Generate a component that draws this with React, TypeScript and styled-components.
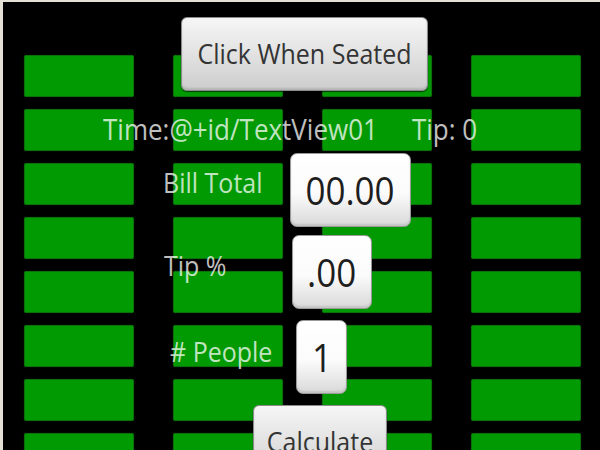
import React from 'react';
import styled, { createGlobalStyle } from 'styled-components';

const GlobalStyle = createGlobalStyle`
  html, body {
    margin: 0;
    padding: 0;
    background: #000000;
  }
  * {
    box-sizing: border-box;
  }
`;

const Screen = styled.div`
  position: relative;
  width: 600px;
  height: 450px;
  overflow: hidden;
  background: #000000;
  border-top: 2px solid #e4e0d6;
  border-left: 3px solid #e4e0d6;
  font-family: "Open Sans", "DejaVu Sans", sans-serif;
`;

const TileGrid = styled.div`
  display: grid;
  grid-template-columns: repeat(4, 110px);
  grid-auto-rows: 42px;
  column-gap: 39px;
  row-gap: 12px;
  padding: 53px 0 0 21px;
`;

const Tile = styled.div`
  background: #029a02;
  border: 1px solid #0b6f0b;
  border-radius: 2px;
  box-shadow: 0 0 1px #0a5a0a;
`;

const Form = styled.div`
  position: absolute;
  inset: 0;
  display: flex;
  flex-direction: column;
  align-items: flex-start;
  padding-top: 15px;

  & > * {
    flex-shrink: 0;
  }
`;

// screenshot is stretched a little vertically
const Tall = styled.span`
  display: inline-block;
  transform: scaleY(1.12);
`;

const AndroidButton = styled.button<{ $left: number; $width: number; $top?: number }>`
  display: flex;
  align-items: center;
  justify-content: center;
  margin: ${p => p.$top ?? 0}px 0 0 ${p => p.$left}px;
  width: ${p => p.$width}px;
  height: 74px;
  padding: 0 0 3px;
  border: 1px solid #8a8a8a;
  border-radius: 6px;
  background: linear-gradient(#f6f6f6 0%, #e4e4e4 45%, #cdcdcd 100%);
  box-shadow: inset 0 -2px 2px rgba(0, 0, 0, 0.12), 0 1px 1px rgba(0, 0, 0, 0.6);
  color: #343434;
  font-family: "Open Sans", "DejaVu Sans", sans-serif;
  font-size: 25px;
  cursor: pointer;
`;

const InfoRow = styled.div`
  display: flex;
  gap: 34px;
  margin: 21px 0 0 100px;
  height: 34px;
  font-size: 26px;
`;

const Label = styled.span<{ $offset?: number }>`
  margin-top: ${p => p.$offset ?? 0}px;
  color: rgba(255, 255, 255, 0.76);
  font-size: inherit;
  line-height: 34px;
  white-space: nowrap;
`;

const FieldRow = styled.div<{ $left: number; $gap: number; $top: number }>`
  display: flex;
  align-items: flex-start;
  gap: ${p => p.$gap}px;
  margin: ${p => p.$top}px 0 0 ${p => p.$left}px;
  font-size: 25px;
`;

const EditBox = styled.div<{ $width: number }>`
  display: flex;
  align-items: center;
  justify-content: center;
  width: ${p => p.$width}px;
  height: 74px;
  border: 1px solid #9a9a9a;
  border-radius: 7px;
  background: linear-gradient(#ffffff 0%, #fbfbfb 55%, #d9d9d9 100%);
  box-shadow: inset 0 -2px 2px rgba(0, 0, 0, 0.1);
  color: #1e1e1e;
  font-size: 35px;
  padding-bottom: 2px;
`;

const fields = [
  { label: 'Bill Total', value: '00.00', left: 160, gap: 27, top: 7, offset: 12, width: 121 },
  { label: 'Tip %', value: '.00', left: 161, gap: 65, top: 8, offset: 13, width: 80 },
  { label: '# People', value: '1', left: 167, gap: 24, top: 11, offset: 14, width: 51 },
];

export default function App() {
  const tiles = Array.from({ length: 32 }, (_, i) => i);

  return (
    <>
      <GlobalStyle />
      <Screen>
        <TileGrid>
          {tiles.map(i => (
            <Tile key={i} />
          ))}
        </TileGrid>
        <Form>
          <AndroidButton $left={178} $width={247}>
            <Tall>Click When Seated</Tall>
          </AndroidButton>
          <InfoRow>
            <Label><Tall>Time:@+id/TextView01</Tall></Label>
            <Label><Tall>Tip: 0</Tall></Label>
          </InfoRow>
          {fields.map(f => (
            <FieldRow key={f.label} $left={f.left} $gap={f.gap} $top={f.top}>
              <Label $offset={f.offset}><Tall>{f.label}</Tall></Label>
              <EditBox $width={f.width}><Tall>{f.value}</Tall></EditBox>
            </FieldRow>
          ))}
          <AndroidButton $left={250} $width={134} $top={11}>
            <Tall>Calculate</Tall>
          </AndroidButton>
        </Form>
      </Screen>
    </>
  );
}
